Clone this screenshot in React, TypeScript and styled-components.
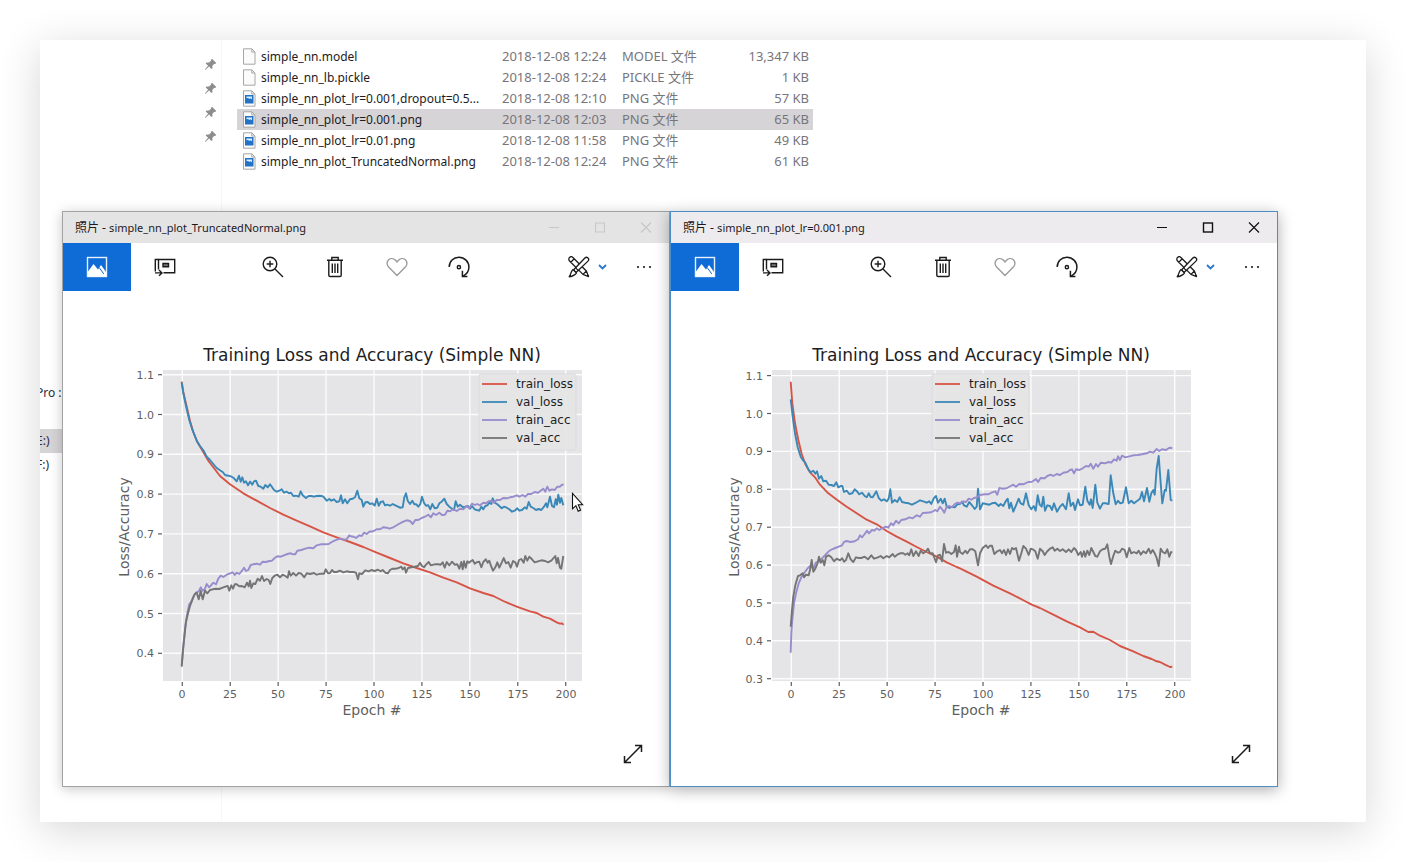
import React from "react";
import styled, { createGlobalStyle, css } from "styled-components";

const GlobalStyle = createGlobalStyle`
  *, *::before, *::after { box-sizing: border-box; }
  body {
    margin: 0;
    background: #fff;
    font-family: "Noto Sans", "Noto Sans CJK SC", sans-serif;
  }
`;

const Page = styled.div`
  display: flex;
  min-height: 100vh;
  padding: 40px;
  background: #fff;
`;

const Desktop = styled.main`
  position: relative;
  display: flex;
  flex: 1;
  min-width: 0;
  overflow: hidden;
  background: #fff;
  box-shadow: 0 8px 40px rgba(0, 0, 0, 0.16);
`;

/* ---------- Explorer ---------- */

const Sidebar = styled.nav`
  flex: 0 0 182px;
  display: flex;
  flex-direction: column;
  padding-top: 12px;
  border-right: 1px solid #f7f7f7;
`;

const PinList = styled.ul`
  display: flex;
  flex-direction: column;
  margin: 0;
  padding: 0 4px 0 0;
  list-style: none;
`;

const PinItem = styled.li`
  display: flex;
  align-items: center;
  justify-content: flex-end;
  height: 24px;
`;

const DriveList = styled.ul`
  margin: 233px 0 0;
  padding: 0;
  list-style: none;
`;

const DriveItem = styled.li<{ $selected?: boolean }>`
  height: 24px;
  line-height: 24px;
  font-size: 12px;
  text-indent: -4px;
  color: #2b2b3c;
  background: ${(p) => (p.$selected ? "#d6d4d6" : "transparent")};
`;

const FileTable = styled.table`
  align-self: flex-start;
  width: 576px;
  margin: 6px 0 0 15px;
  table-layout: fixed;
  border-collapse: collapse;
  line-height: 21px;
  color: #77757a;
`;

const FileRow = styled.tr<{ $selected?: boolean }>`
  height: 21px;
  background: ${(p) => (p.$selected ? "#d6d4d6" : "transparent")};
`;

const Cell = styled.td<{ $right?: boolean }>`
  padding: 0 4px 0 0;
  text-align: ${(p) => (p.$right ? "right" : "left")};
  font-size: 13px;
  white-space: nowrap;
`;

const NameCell = styled.th`
  padding: 0 0 0 6px;
  text-align: left;
  font-size: 12px;
  font-weight: 400;
  color: #1d1b24;
  white-space: nowrap;
`;

const NameInner = styled.span`
  display: flex;
  align-items: center;
  gap: 5px;
`;

/* ---------- Windows ---------- */

const WindowLayer = styled.div`
  position: absolute;
  top: 171px;
  right: 88px;
  bottom: 35px;
  left: 22px;
  display: grid;
  grid-template-columns: 1fr 1fr;
`;

const WindowFrame = styled.section<{ $active?: boolean }>`
  display: flex;
  flex-direction: column;
  min-width: 0;
  background: #fff;
  ${(p) =>
    p.$active
      ? css`
          border: 1px solid #4d8ec6;
          box-shadow: 0 3px 14px rgba(0, 0, 0, 0.32);
        `
      : css`
          border: 1px solid #a3a3a3;
          box-shadow: 0 2px 12px rgba(0, 0, 0, 0.22);
        `}
`;

const TitleBar = styled.header<{ $active?: boolean }>`
  display: flex;
  align-items: center;
  height: 31px;
  padding-left: 12px;
  background: ${(p) => (p.$active ? "#eeebee" : "#e5e4e5")};
  color: ${(p) => (p.$active ? "#111" : "#c8c7c8")};
`;

const Title = styled.h2`
  flex: 1;
  margin: 0;
  font-size: 11px;
  line-height: 16px;
  font-weight: 400;
  color: #1c1a1d;
`;

const AppName = styled.span`
  font-size: 12px;
`;

const IconButton = styled.button<{ $width: number; $primary?: boolean; $muted?: boolean }>`
  display: flex;
  align-items: center;
  justify-content: center;
  gap: 8px;
  width: ${(p) => p.$width}px;
  height: 100%;
  padding: 0;
  border: 0;
  background: ${(p) => (p.$primary ? "#0f6bd6" : "transparent")};
  color: ${(p) => (p.$primary ? "#fff" : p.$muted ? "#9b9b9b" : "#1b1b1b")};
`;

const CaptionButton = styled(IconButton)`
  color: inherit;
`;

const Toolbar = styled.div`
  display: flex;
  height: 48px;
`;

const ToolGroup = styled.div<{ $end?: boolean }>`
  display: flex;
  margin-left: ${(p) => (p.$end ? "auto" : "43px")};
`;

const Viewer = styled.div`
  position: relative;
  flex: 1;
  min-height: 0;
`;

const ChartSvg = styled.svg`
  display: block;
  width: 100%;
  height: 100%;
  font-family: "DejaVu Sans", sans-serif;
`;

const ExpandButton = styled.button`
  position: absolute;
  right: 26px;
  bottom: 22px;
  display: flex;
  padding: 0;
  border: 0;
  background: transparent;
  color: #1b1b1b;
`;

const Pointer = styled.svg`
  position: absolute;
  top: 452px;
  left: 531px;
`;

/* ---------- Icons ---------- */

const PinIcon = () => (
  <svg width="13" height="13" viewBox="0 0 13 13" aria-hidden="true">
    <path d="M8 .8l4.300 4.300-1.100.8-.8-.1-2 2 .1 2.400-1 .9-2.500-2.500-3.500 3.200-.7-.3 3.300-3.700L1.700 5.400l.9-1 2.500.1 2.100-2-.1-.8z" fill="#8d8d90" />
  </svg>
);

const FileIcon = ({ image }: { image?: boolean }) => (
  <svg width="13" height="17" viewBox="0 0 13 17" aria-hidden="true">
    <path d="M.5.8h8.300l3.200 3.200v12.200H.5z" fill="#fbfbfb" stroke="#a6a6a9" />
    <path d="M8.800.8v3.200H12" fill="none" stroke="#a6a6a9" />
    {image && (
      <>
        <rect x="2" y="5" width="8.500" height="8.500" fill="#2273c6" />
        <path d="M3.500 6.500h5.500v2.700l-1.400-.9-1 .6-1.600-.9-1.500.2z" fill="#d8ecfb" />
      </>
    )}
  </svg>
);

const PhotoIcon = () => (
  <svg width="22" height="22" viewBox="0 0 22 22" aria-hidden="true">
    <rect x="1.500" y="1.500" width="19" height="19" fill="none" stroke="#e6f2ff" strokeWidth="1.400" />
    <path d="M2 15.500l5.500-7.500 4.500 5.500 3-4.500L20 16v4.500H2z" fill="#fff" />
    <path d="M13.200 11.500l4.600 6.500" stroke="#0f6bd6" strokeWidth="1" />
  </svg>
);

const SlideshowIcon = () => (
  <svg width="22" height="22" viewBox="0 0 22 22" fill="none" stroke="currentColor" strokeWidth="1.400" aria-hidden="true">
    <path d="M4.500 13.500v-10h16.200v13.200H9.500" />
    <path d="M4.500 3.500H1.300v12" />
    <path d="M9 7.500h5.500v3.200H9z" fill="#777" />
    <path d="M1 16.900h6.500M5 14l3 2.900-3 2.900" />
  </svg>
);

const ZoomIcon = () => (
  <svg width="22" height="22" viewBox="0 0 22 22" fill="none" stroke="currentColor" strokeWidth="1.400" aria-hidden="true">
    <circle cx="8" cy="8" r="6.800" />
    <path d="M13 13l8 8M4.700 8h6.600M8 4.700v6.600" />
  </svg>
);

const TrashIcon = () => (
  <svg width="18" height="22" viewBox="0 0 18 22" fill="none" stroke="currentColor" strokeWidth="1.400" aria-hidden="true">
    <path d="M1 4.200h16M5.800 4V1.500h6.400V4M2.800 4.500v14.700q0 1.300 1.300 1.300h9.800q1.300 0 1.300-1.300V4.500" />
    <path d="M6.300 7.500v9.500M9 7.500v9.500M11.700 7.500v9.500" />
  </svg>
);

const HeartIcon = () => (
  <svg width="22" height="20" viewBox="0 0 22 20" fill="none" stroke="currentColor" strokeWidth="1.400" aria-hidden="true">
    <path d="M11 18.500L2.400 9.700C.5 7.600.7 4.500 2.600 2.800c2-1.800 5-1.500 6.700.3L11 4.900l1.700-1.800c1.700-1.800 4.700-2.100 6.700-.3 1.900 1.700 2.100 4.800.2 6.900z" />
  </svg>
);

const RotateIcon = () => (
  <svg width="22" height="22" viewBox="0 0 22 22" fill="none" stroke="currentColor" strokeWidth="1.500" aria-hidden="true">
    <path d="M1.200 11C1.200 5.300 5.500 1.300 10.900 1.300c5.600 0 10 4.300 10 9.800 0 3.900-2 7-5.700 9" />
    <path d="M14.400 14.800v5.700h5" />
    <circle cx="10.900" cy="11.200" r="1.600" />
  </svg>
);

const EditIcon = () => (
  <svg width="22" height="22" viewBox="0 0 22 22" fill="#fff" stroke="currentColor" strokeWidth="1.300" strokeLinejoin="round" aria-hidden="true">
    <g transform="rotate(45 11 11)">
      <path d="M0 8.600h19l5.500 2.400-5.500 2.400H0a2.400 2.400 0 0 1 0-4.800zM1.800 8.600v4.800M19 8.600v4.800" />
    </g>
    <g transform="rotate(-45 11 11)">
      <path d="M5 9.200l16.500-.4a2.200 2.200 0 0 1 0 4.400L5 12.800z" />
      <path d="M5 8.600C1.500 8.200.6 10.600-2.800 11c3 2.700 7.800 2.900 7.800 2.400zM8 9.200v3.600" />
    </g>
  </svg>
);

const ChevronIcon = () => (
  <svg width="9" height="6" viewBox="0 0 9 6" fill="none" stroke="#2878cf" strokeWidth="1.800" aria-hidden="true">
    <path d="M1 1l3.500 3.500L8 1" />
  </svg>
);

const MoreIcon = () => (
  <svg width="16" height="4" viewBox="0 0 16 4" fill="currentColor" aria-hidden="true">
    <circle cx="2" cy="2" r="1.100" />
    <circle cx="8" cy="2" r="1.100" />
    <circle cx="14" cy="2" r="1.100" />
  </svg>
);

const ExpandIcon = () => (
  <svg width="20" height="20" viewBox="0 0 20 20" fill="none" stroke="currentColor" strokeWidth="1.500" aria-hidden="true">
    <path d="M1.800 18.200L18.200 1.800M12 1.500h6.500V8M1.500 12v6.500H8" />
  </svg>
);

const MinimizeIcon = () => (
  <svg width="12" height="12" viewBox="0 0 12 12" stroke="currentColor" aria-hidden="true">
    <path d="M1 5.500h10" />
  </svg>
);

const MaximizeIcon = ({ bold }: { bold?: boolean }) => (
  <svg width="12" height="12" viewBox="0 0 12 12" fill="none" stroke="currentColor" strokeWidth={bold ? 1.4 : 1} aria-hidden="true">
    <rect x="1.500" y="1" width="9" height="9" />
  </svg>
);

const CloseIcon = () => (
  <svg width="12" height="12" viewBox="0 0 12 12" stroke="currentColor" strokeWidth="1.200" aria-hidden="true">
    <path d="M1 .500l10 10M11 .500L1 10.500" />
  </svg>
);

/* ---------- Charts ---------- */

type Segment = { dx: number; dy: number; points: string };
type Series = { name: string; color: string; segments: Segment[] };
type Chart = {
  originX: number;
  axisX: number;
  legendX: number;
  ticksY: { label: string; y: number }[];
  series: Series[];
};

const RED = "#d65445";
const BLUE = "#3a88b8";
const PURPLE = "#988dcc";
const GREY = "#747474";

const seg = (dx: number, dy: number, points: string): Segment => ({ dx, dy, points });

/* Sample points are on a grid three times finer than the chart's units. */
const toPoints = (segments: Segment[]) =>
  segments
    .flatMap(({ dx, dy, points }) =>
      points.split(" ").map((pair) => {
        const [x, y] = pair.split(",").map(Number);
        return `${((x + dx) / 3).toFixed(1)},${((y + dy) / 3).toFixed(1)}`;
      })
    )
    .join(" ");

const truncatedNormal: Chart = {
  originX: 47,
  axisX: 72,
  legendX: 369,
  ticksY: [
    { label: "1.1", y: 34.7 },
    { label: "1.0", y: 74.5 },
    { label: "0.9", y: 114.3 },
    { label: "0.8", y: 154.1 },
    { label: "0.7", y: 193.9 },
    { label: "0.6", y: 233.7 },
    { label: "0.5", y: 273.5 },
    { label: "0.4", y: 313.3 },
  ],
  series: [
    {
      name: "train_loss",
      color: RED,
      segments: [
        seg(0, 0, "215,125 220,156 230,200 240,243 250,276 262,306 280,336 295,362 310,382 330,408 360,433 400,460 440,482 480,504 520,524 560,542 600,559 640,577 680,592"),
        seg(720, 570, "0,36 40,51 80,68 120,84 160,100 200,114 240,127 280,143 320,157 360,175 400,189 430,198 460,213 500,230 540,244 560,249 580,260 600,266 620,277 630,281 635,280 641,284"),
      ],
    },
    {
      name: "val_loss",
      color: BLUE,
      segments: [
        seg(0, 0, "215,128 220,160 228,198 238,240 248,272 260,302 270,318 282,334 290,350 300,360 310,372 320,384 330,391 338,396 345,405 355,407 365,410 372,415 380,424 387,407 392,425 397,412 402,428 408,424 414,436 420,425 427,434 432,424 438,422 445,438 452,440 460,446 466,435 473,442 480,433 486,441 492,450 500,455 508,452 515,448 522,458 530,455 537,460 543,458 550,468 558,467 566,470 572,454 578,466 588,474 596,468 604,468 612,470 620,468 628,467 636,468 642,472 650,482 658,477 664,482 672,478 680,486 688,484 693,466 698,490 705,478 712,490"),
        seg(720, 0, "0,478 8,476 15,472 22,452 28,475 35,480 40,500 46,487 53,486 60,492 67,490 74,497 80,476 86,497 92,486 99,484 105,496 112,494 120,497 128,492 136,496 144,500 150,503 158,502 163,472 168,460 173,482 180,492 187,482 193,493 199,493 205,500 211,492 216,470 222,488 228,497 235,496 241,508 247,492 254,505 262,503 268,490 275,485 283,476 290,492 298,500 306,506 312,510 317,484 323,500 330,494 338,501 346,500 354,498 360,506 366,498 374,508 380,510 388,512 394,500 400,508 406,498 412,496 418,488 424,492 428,475 434,488 441,492 448,498 455,505 462,500 470,503 478,508 486,515 494,512 502,505 508,512 516,510 524,502 530,506 536,486 542,500 550,504 558,510 566,507 574,510 582,500 588,490 592,502 600,470 606,498 612,502 617,478 621,494 625,464 630,488 634,474 640,496"),
      ],
    },
    {
      name: "train_acc",
      color: PURPLE,
      segments: [
        seg(0, 570, "215,405 220,350 226,290 232,250 238,222 244,215 250,200 258,188 266,184 272,172 278,182 284,178 290,162 297,172 303,166 310,158 318,163 325,146 332,137 340,141 350,134 358,131 368,127 374,135 380,128 388,132 396,122 402,113 408,123 415,120 422,105 430,103 440,101 450,104 458,95 468,96 478,93 486,92 494,84 502,79 512,80 522,76 532,72 542,70 550,73 556,73 562,62 574,60 586,56 598,53 610,55 620,46 632,43 645,43 656,42 665,36 675,31 690,26 700,29 710,28 718,16"),
        seg(720, 0, "0,588 10,590 18,594 28,586 35,588 42,578 50,582 58,575 70,574 80,568 90,568 100,562 110,563 118,566 130,562 140,556 150,550 160,545 170,541 180,543 188,552 196,540 205,540 215,534 225,530 235,524 243,532 250,520 258,525 268,518 276,525 285,524 292,512 300,514 310,508 320,513 330,506 340,508 350,498 358,505 366,491 375,495 382,492 390,496 400,488 408,490 416,484 425,482 432,488 440,480 450,480 460,474 470,475 480,472 490,470 500,466 508,470 518,465 526,470 534,462 544,462 554,456 564,458 572,452 580,446 586,455 592,440 598,452 606,448 614,450 622,440 630,440 636,434 641,434"),
      ],
    },
    {
      name: "val_acc",
      color: GREY,
      segments: [
        seg(0, 570, "215,410 219,360 224,310 228,275 234,250 240,228 246,212 254,192 260,188 266,208 272,183 278,208 285,182 292,190 300,180 308,178 318,176 328,177 338,173 346,170 353,168 358,182 364,166 369,176 374,163 380,163 388,169 396,168 404,172 411,158 416,169 420,152 424,174 430,160 436,162 443,146 450,152 456,138 462,153 470,147 476,150 481,162 487,144 494,137 502,134 510,142 518,134 526,138 533,143 537,124 542,137 550,129 558,137 566,129 574,131 583,142 590,130 600,132 612,129 620,134 632,131 642,131 647,118 654,130 660,129 666,120 672,126 680,126 690,122 700,127 710,124"),
        seg(720, 570, "0,126 10,126 18,128 24,148 28,130 36,132 46,121 56,124 64,120 74,123 84,119 92,124 98,120 106,128 114,130 120,120 128,116 138,116 146,114 154,110 158,118 164,112 168,128 174,114 184,112 194,110 204,108 210,98 216,108 222,112 228,104 236,96 242,106 254,103 264,103 272,104 278,97 284,113 290,96 298,106 306,95 314,104 322,103 328,116 334,96 338,118 342,94 347,113 352,94 357,98 362,94 368,90 374,101 380,97 388,95 394,112 400,96 407,88 413,98 418,92 424,110 429,122 436,112 442,97 448,113 455,98 461,84 468,100 475,96 482,113 489,93 496,97 501,110 507,90 514,87 521,98 526,78 532,92 538,80 546,88 554,97 564,94 574,91 586,93 594,97 604,92 616,78 620,100 624,84 630,113 634,116 640,78"),
      ],
    },
  ],
};

const lowRate: Chart = {
  originX: 49,
  axisX: 71,
  legendX: 212,
  ticksY: [
    { label: "1.1", y: 35.6 },
    { label: "1.0", y: 73.5 },
    { label: "0.9", y: 111.4 },
    { label: "0.8", y: 149.3 },
    { label: "0.7", y: 187.2 },
    { label: "0.6", y: 225.1 },
    { label: "0.5", y: 263 },
    { label: "0.4", y: 300.8 },
    { label: "0.3", y: 338.7 },
  ],
  series: [
    {
      name: "train_loss",
      color: RED,
      segments: [
        seg(0, 0, "212,125 217,190 225,250 235,300 245,342 256,372 270,397 285,412 300,434 325,460 355,482 380,500 410,520 440,539 470,553 500,573 530,590 560,605 590,621 620,636 650,650 680,667 710,681"),
        seg(720, 0, "0,685 50,710 100,737 150,760 200,786 215,794 240,804 280,824 320,844 360,862 385,876 400,875 420,887 450,900 480,918 520,934 550,948 575,957 590,964 600,966 615,974 630,981 637,980"),
      ],
    },
    {
      name: "val_loss",
      color: BLUE,
      segments: [
        seg(0, 0, "212,178 218,230 225,280 233,322 242,350 250,362 256,368 265,388 272,397 280,392 286,401 291,394 297,416 304,408 310,424 318,422 326,434 334,435 342,438 349,427 355,442 362,438 367,438 372,456 380,452 388,462 397,460 404,448 412,455 418,463 426,458 434,468 440,472 446,460 452,471 458,472 464,462 469,454 476,474 484,482 492,478 500,484 506,476 511,448 516,488 524,480 532,486 539,472 546,486 556,488 566,490 576,494 588,488 600,481 610,484 620,488 628,484 634,492 641,475 648,468 654,488 662,476 668,490 674,476 680,500 688,504 696,500 704,502 712,493"),
        seg(720, 0, "0,492 6,485 12,496 20,500 28,486 36,496 44,507 50,500 54,446 60,508 68,490 78,492 88,494 96,490 106,488 116,498 122,492 130,498 137,484 143,476 148,505 153,488 160,515 168,496 176,476 182,490 190,494 198,460 206,496 214,508 221,498 227,512 233,466 239,494 245,500 250,470 255,512 262,496 270,498 276,510 282,490 291,515 300,500 308,492 318,508 326,460 332,498 340,488 345,510 354,478 360,496 368,494 376,440 382,482 389,494 393,478 398,504 406,434 412,488 420,506 428,490 436,490 446,492 452,406 460,460 467,493 474,482 481,490 488,488 498,442 506,490 514,482 522,490 530,484 540,476 546,456 552,484 561,444 568,485 574,460 580,450 584,464 590,385 596,348 602,430 607,490 614,450 618,452 625,390 632,480 637,482"),
      ],
    },
    {
      name: "train_acc",
      color: PURPLE,
      segments: [
        seg(0, 0, "212,938 214,880 217,840 222,790 228,760 236,730 244,712 252,700 262,686 272,676 280,688 287,668 296,665 306,655 316,645 326,634 336,628 346,624 356,620 366,616 372,606 380,603 392,606 404,604 414,598 420,586 426,592 434,582 441,572 447,580 456,570 463,572 470,565 478,570 488,564 498,560 505,563 513,550 520,556 528,542 536,550 544,540 556,538 568,532 578,535 590,526 600,530 608,519 620,518 634,517 646,510 652,514 660,500 668,510 673,518 680,500 688,498 696,502 704,492 712,488"),
        seg(720, 0, "0,490 10,484 18,486 26,476 34,479 42,474 52,472 60,465 74,463 86,463 96,457 106,454 112,464 118,444 128,446 140,445 152,438 160,434 168,440 178,432 190,433 204,426 216,425 228,417 234,426 242,414 254,415 262,408 272,404 280,408 290,402 300,405 310,398 322,396 330,390 336,388 342,400 348,388 358,390 368,385 378,378 386,380 392,371 400,386 408,372 414,380 422,368 434,370 446,366 454,368 462,358 470,362 474,349 480,360 486,347 496,352 508,349 520,346 534,345 546,343 560,340 570,335 580,338 590,327 598,333 606,328 618,330 628,323 637,324"),
      ],
    },
    {
      name: "val_acc",
      color: GREY,
      segments: [
        seg(0, 0, "212,860 216,810 220,770 226,736 234,708 240,706 248,700 252,712 258,704 266,706 270,690 275,660 280,695 286,686 292,672 297,650 302,668 308,660 313,676 318,650 326,646 334,652 342,664 350,656 360,661 367,655 372,665 378,660 385,640 392,658 400,666 408,652 416,654 424,654 434,650 444,658 454,646 462,656 472,653 482,648 490,655 500,648 508,652 518,642 524,650 532,644 540,640 550,640 556,644 563,640 568,646 574,628 580,648 588,634 596,648 602,632 610,640 618,634 624,626 630,640 638,640 642,650 648,667 654,646 660,644 666,664 672,612 678,638 686,636 694,642 702,636 707,616 711,650 717,620"),
        seg(720, 0, "0,636 8,642 16,632 22,640 30,628 38,628 46,634 54,676 60,640 68,624 78,616 84,624 90,617 96,617 103,642 112,634 120,630 126,640 132,630 138,645 144,628 150,642 156,624 162,628 168,624 177,662 184,640 190,618 198,626 206,645 212,626 218,628 226,634 233,656 240,626 248,634 254,645 262,634 270,626 278,622 284,632 292,626 300,633 308,628 318,636 326,628 334,636 342,624 348,630 355,645 362,636 366,650 372,634 376,650 382,632 388,645 394,624 400,636 406,648 412,650 420,634 428,628 436,626 442,613 448,650 453,672 460,648 466,632 474,638 480,636 486,626 494,630 500,652 508,624 514,640 522,636 530,640 536,632 542,644 550,634 558,640 566,626 572,640 578,630 584,640 590,654 596,678 602,626 608,636 616,640 622,628 628,650 633,636 637,638"),
      ],
    },
  ],
};

const EPOCH_TICKS = [0, 25, 50, 75, 100, 125, 150, 175, 200];

const TrainingChart = ({ chart }: { chart: Chart }) => {
  const left = chart.axisX - 19;
  return (
    <ChartSvg viewBox="0 0 606 495" role="img" aria-label="Training Loss and Accuracy (Simple NN)">
      <g transform={`translate(${chart.originX} 49)`}>
        <text x={left + 209} y="21" fontSize="17" textAnchor="middle" fill="#1d1d1f">
          Training Loss and Accuracy (Simple NN)
        </text>
        <rect x={left} y="30" width="419" height="311" fill="#e5e4e6" />
        {EPOCH_TICKS.map((epoch) => {
          const x = chart.axisX + 0.3 + epoch * 1.917;
          return (
            <g key={epoch}>
              <path d={`M${x} 30V341`} stroke="#fcfcfc" strokeWidth="1.400" />
              <path d={`M${x} 342v4`} stroke="#5d5d5d" strokeWidth="1.200" />
              <text x={Math.round(x)} y="358" fontSize="11" textAnchor="middle" fill="#5f5f5f">
                {epoch}
              </text>
            </g>
          );
        })}
        {chart.ticksY.map(({ label, y }) => (
          <g key={label}>
            <path d={`M${left} ${y}h419`} stroke="#fcfcfc" strokeWidth="1.400" />
            <path d={`M${left - 5} ${y}h4`} stroke="#5d5d5d" strokeWidth="1.200" />
            <text x={left - 9} y={Math.round(y) + 4} fontSize="11" textAnchor="end" fill="#5f5f5f">
              {label}
            </text>
          </g>
        ))}
        {chart.series.map((s) => (
          <polyline
            key={s.name}
            points={toPoints(s.segments)}
            fill="none"
            stroke={s.color}
            strokeWidth="1.900"
            strokeLinejoin="round"
          />
        ))}
        <rect x={chart.legendX} y="34" width="97" height="76" rx="2" fill="#e5e4e6" fillOpacity="0.9" stroke="#dcdbdd" />
        {chart.series.map((s, i) => (
          <g key={s.name}>
            <path d={`M${chart.legendX + 3} ${44 + i * 18}h25`} stroke={s.color} strokeWidth="1.800" />
            <text x={chart.legendX + 37} y={48 + i * 18} fontSize="12" fill="#1d1d1f">
              {s.name}
            </text>
          </g>
        ))}
        <text x={left + 209} y="375" fontSize="14" textAnchor="middle" fill="#5f5f5f">
          Epoch #
        </text>
        <text transform="translate(19 187) rotate(-90)" fontSize="14" textAnchor="middle" fill="#5f5f5f">
          Loss/Accuracy
        </text>
      </g>
    </ChartSvg>
  );
};

const PhotoWindow = ({ file, chart, active }: { file: string; chart: Chart; active?: boolean }) => (
  <WindowFrame $active={active}>
    <TitleBar $active={active}>
      <Title>
        <AppName>照片 - </AppName>
        {file}
      </Title>
      <CaptionButton $width={46} aria-label="Minimize">
        <MinimizeIcon />
      </CaptionButton>
      <CaptionButton $width={46} aria-label="Maximize">
        <MaximizeIcon bold={active} />
      </CaptionButton>
      <CaptionButton $width={46} aria-label="Close">
        <CloseIcon />
      </CaptionButton>
    </TitleBar>
    <Toolbar>
      <IconButton $width={68} $primary aria-label="Photo">
        <PhotoIcon />
      </IconButton>
      <IconButton $width={68} aria-label="Slideshow">
        <SlideshowIcon />
      </IconButton>
      <ToolGroup>
        <IconButton $width={62} aria-label="Zoom in">
          <ZoomIcon />
        </IconButton>
        <IconButton $width={62} aria-label="Delete">
          <TrashIcon />
        </IconButton>
        <IconButton $width={62} $muted aria-label="Favourite">
          <HeartIcon />
        </IconButton>
        <IconButton $width={62} aria-label="Rotate">
          <RotateIcon />
        </IconButton>
      </ToolGroup>
      <ToolGroup $end>
        <IconButton $width={64} aria-label="Edit">
          <EditIcon />
          <ChevronIcon />
        </IconButton>
        <IconButton $width={50} aria-label="More">
          <MoreIcon />
        </IconButton>
      </ToolGroup>
    </Toolbar>
    <Viewer>
      <TrainingChart chart={chart} />
      <ExpandButton aria-label="Full screen">
        <ExpandIcon />
      </ExpandButton>
    </Viewer>
  </WindowFrame>
);

const files = [
  { name: "simple_nn.model", date: "2018-12-08 12:24", type: "MODEL 文件", size: "13,347 KB" },
  { name: "simple_nn_lb.pickle", date: "2018-12-08 12:24", type: "PICKLE 文件", size: "1 KB" },
  { name: "simple_nn_plot_lr=0.001,dropout=0.5...", date: "2018-12-08 12:10", type: "PNG 文件", size: "57 KB", image: true },
  { name: "simple_nn_plot_lr=0.001.png", date: "2018-12-08 12:03", type: "PNG 文件", size: "65 KB", image: true, selected: true },
  { name: "simple_nn_plot_lr=0.01.png", date: "2018-12-08 11:58", type: "PNG 文件", size: "49 KB", image: true },
  { name: "simple_nn_plot_TruncatedNormal.png", date: "2018-12-08 12:24", type: "PNG 文件", size: "61 KB", image: true },
];

export default function App() {
  return (
    <>
      <GlobalStyle />
      <Page>
        <Desktop>
          <Sidebar>
            <PinList>
              {[0, 1, 2, 3].map((n) => (
                <PinItem key={n}>
                  <PinIcon />
                </PinItem>
              ))}
            </PinList>
            <DriveList>
              <DriveItem>Pro :</DriveItem>
              <DriveItem />
              <DriveItem $selected>E:)</DriveItem>
              <DriveItem>F:)</DriveItem>
            </DriveList>
          </Sidebar>
          <FileTable>
            <colgroup>
              <col width="265" />
              <col width="120" />
              <col width="100" />
              <col />
            </colgroup>
            <tbody>
              {files.map((f) => (
                <FileRow key={f.name} $selected={f.selected}>
                  <NameCell scope="row">
                    <NameInner>
                      <FileIcon image={f.image} />
                      {f.name}
                    </NameInner>
                  </NameCell>
                  <Cell>{f.date}</Cell>
                  <Cell>{f.type}</Cell>
                  <Cell $right>{f.size}</Cell>
                </FileRow>
              ))}
            </tbody>
          </FileTable>
          <WindowLayer>
            <PhotoWindow file="simple_nn_plot_TruncatedNormal.png" chart={truncatedNormal} />
            <PhotoWindow file="simple_nn_plot_lr=0.001.png" chart={lowRate} active />
          </WindowLayer>
          <Pointer width="13" height="21" viewBox="0 0 13 21" aria-hidden="true">
            <path d="M1.500 1.500v15.300l3.400-3.200 2.300 5.600 2.400-1-2.300-5.500h4.300z" fill="#fff" stroke="#111" strokeWidth="1.100" />
          </Pointer>
        </Desktop>
      </Page>
    </>
  );
}
